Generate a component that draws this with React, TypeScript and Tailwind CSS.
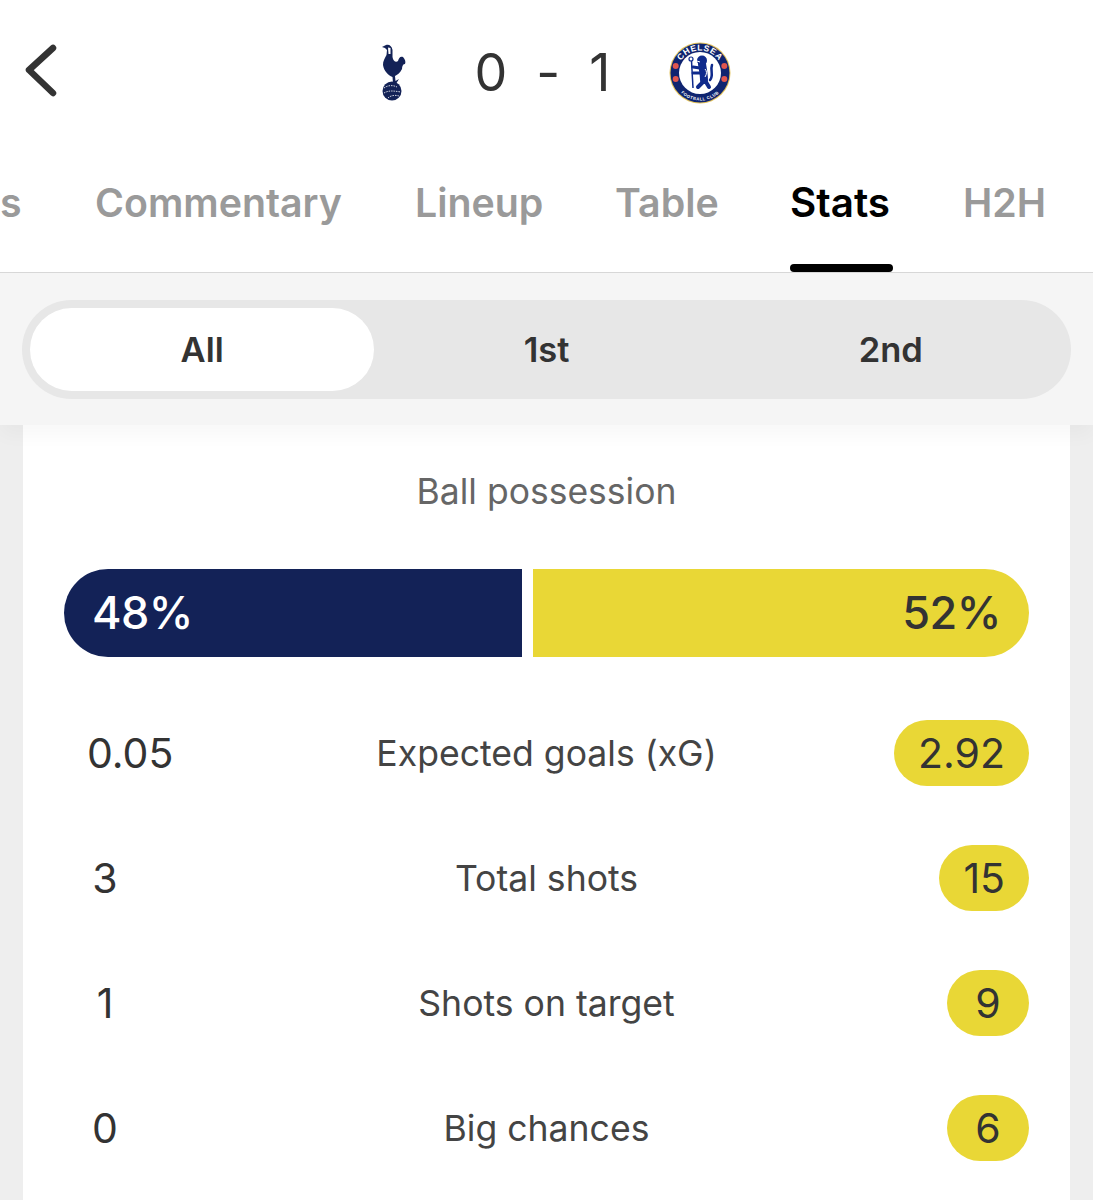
const F = "font-['Inter','Liberation_Sans',sans-serif]";

function Spurs() {
  return (
    <svg width="30" height="60" viewBox="0 0 30 60">
      <path d="M4 4 L8 2 C11 1 14 3 14.5 7 L14.5 14 C15 18 18 20 20 18 C21 15 22 13 25 14 C27 16 28 19 27 21 C25 21 24 23 24 26 C22 30 19 32 17 33 L17.5 38 L21 36 L18.5 40 L15 40 L14.5 34 C10 32 6 28 5 22 C4.8 18 7 15 8.5 12 L9 7 L7 5 Z" fill="#132257" />
      <path d="M10 4.5 L12.5 5 L12.5 11 L10.5 11 Z" fill="#ffffff" />
      <circle cx="14" cy="48" r="9.5" fill="#132257" />
      <path d="M6 45 C10 42 15 42 19 44 M6 50 C11 47 16 48 23 49 M10 55 C13 52 18 52 21 53" stroke="#fff" strokeWidth="0.8" fill="none" strokeDasharray="1.5 1" />
    </svg>
  );
}

function Chelsea() {
  return (
    <svg width="62" height="62" viewBox="0 0 62 62">
      <circle cx="31" cy="31" r="30.5" fill="#e4c35a" />
      <circle cx="31" cy="31" r="29.5" fill="#0f2470" />
      <circle cx="31" cy="31" r="21" fill="#fff" />
      <circle cx="6.7" cy="24" r="3" fill="#e0564e" />
      <circle cx="55.3" cy="24" r="3" fill="#e0564e" />
      <circle cx="6.7" cy="37" r="3" fill="#e0564e" />
      <circle cx="55.3" cy="37" r="3" fill="#e0564e" />
      <path id="cfc-top" d="M8.5 31 A22.5 22.5 0 0 1 53.5 31" fill="none" />
      <text fontSize="8.5" fontWeight="700" fill="#fff" fontFamily="Liberation Sans" letterSpacing="0.6">
        <textPath href="#cfc-top" startOffset="50%" textAnchor="middle">CHELSEA</textPath>
      </text>
      <path id="cfc-bot" d="M3.5 31 A27.5 27.5 0 0 0 58.5 31" fill="none" />
      <text fontSize="4.2" fontWeight="700" fill="#fff" fontFamily="Liberation Sans" letterSpacing="0.5">
        <textPath href="#cfc-bot" startOffset="50%" textAnchor="middle">FOOTBALL CLUB</textPath>
      </text>
      <circle cx="22" cy="17" r="2" fill="none" stroke="#0f2a8c" strokeWidth="1.2" />
      <path d="M22.5 19 L24 46" stroke="#0f2a8c" strokeWidth="1.5" />
      <g stroke="#0f2a8c" fill="none" strokeLinecap="round">
        <circle cx="33" cy="18.5" r="5" fill="#0f2a8c" stroke="none" />
        <path d="M33 22 C34 28 35 33 35 38" strokeWidth="8" />
        <path d="M31 26 L24 25 M31 31 L24 31" strokeWidth="3" />
        <path d="M34 40 L29 45 M37 40 L40 45" strokeWidth="4" />
        <path d="M41 38 C45 34 41 28 43 23" strokeWidth="2.5" />
      </g>
      <path d="M36 27 C38 29 38 32 36 35 M28 19 L31 20" stroke="#fff" strokeWidth="1" fill="none" />
    </svg>
  );
}

function Pill({ children, filled }: { children: React.ReactNode; filled: boolean }) {
  return (
    <span className={filled
      ? "flex h-[66px] min-w-[82px] items-center justify-center rounded-[33px] bg-[#e9d736] px-[24px] pt-[2px] text-[41px] leading-none text-[#333333]"
      : "flex h-[66px] min-w-[82px] items-center justify-center rounded-[33px] px-[23px] pt-[2px] text-[41px] leading-none text-[#333333]"}>
      {children}
    </span>
  );
}

function Row({ left, label, right }: { left: string; label: string; right: string }) {
  return (
    <div className="grid h-[125px] grid-cols-[1fr_auto_1fr] items-center">
      <span className="flex justify-start"><Pill filled={false}>{left}</Pill></span>
      <span className="pt-[2px] text-[35.6px] leading-none text-[#444444]">{label}</span>
      <span className="flex justify-end"><Pill filled>{right}</Pill></span>
    </div>
  );
}

export default function App() {
  return (
    <div className={`${F} h-[1200px] w-[1093px] overflow-hidden bg-[#eeeeee]`}>
      <header className="h-[273px] border-b border-[#d8d8d8] bg-white">
        <div className="relative flex h-[145px] items-center justify-center pl-[15px]">
          <svg className="absolute left-[20px] top-[39px]" width="44" height="62" viewBox="0 0 44 62" fill="none">
            <path d="M33 9 L9 31 L33 54" stroke="#333333" strokeWidth="6.5" strokeLinecap="round" strokeLinejoin="round" />
          </svg>
          <Spurs />
          <div className="ml-[67px] mr-[58px] flex w-[136px] justify-between text-[52px] leading-none text-[#333333]">
            <span>0</span><span>-</span><span>1</span>
          </div>
          <Chelsea />
        </div>
        <nav className="flex h-[127px] items-start overflow-hidden pt-[35px] text-[39.3px] font-semibold leading-[46px] text-[#9a9a9a]">
          <span className="w-[95px]">s</span>
          <span className="w-[320px]">Commentary</span>
          <span className="w-[200px]">Lineup</span>
          <span className="w-[175px]">Table</span>
          <span className="relative w-[173px] text-[40.4px] text-black">
            Stats
            <span className="absolute left-0 top-[84px] h-[8px] w-[103px] rounded-full bg-black" />
          </span>
          <span>H2H</span>
        </nav>
      </header>
      <div className="relative z-10 flex h-[152px] items-start bg-[#f5f5f5] px-[22px] pt-[27px] shadow-[0_10px_18px_rgba(0,0,0,0.03)]">
        <div className="grid h-[99px] w-full grid-cols-3 rounded-[50px] bg-[#e7e7e7] p-[8px] text-[34.5px] font-semibold text-[#333333]">
          <div className="flex items-center justify-center rounded-[42px] bg-white">All</div>
          <div className="flex items-center justify-center">1st</div>
          <div className="flex items-center justify-center">2nd</div>
        </div>
      </div>
      <main className="mx-[23px] h-[775px] bg-white px-[41px]">
        <div className="pt-[44px] text-center text-[35.5px] leading-[46px] text-[#666666]">Ball possession</div>
        <div className="mt-[54px] flex h-[88px] gap-[11px] text-[45px] font-medium tracking-[-0.5px]">
          <div className="flex w-[458px] items-center rounded-l-[44px] bg-[#132257] pl-[28px] text-white">48%</div>
          <div className="flex flex-1 items-center justify-end rounded-r-[44px] bg-[#e9d736] pr-[28px] text-[#333333]">52%</div>
        </div>
        <div className="mt-[33px]">
          <Row left="0.05" label="Expected goals (xG)" right="2.92" />
          <Row left="3" label="Total shots" right="15" />
          <Row left="1" label="Shots on target" right="9" />
          <Row left="0" label="Big chances" right="6" />
        </div>
      </main>
    </div>
  );
}
